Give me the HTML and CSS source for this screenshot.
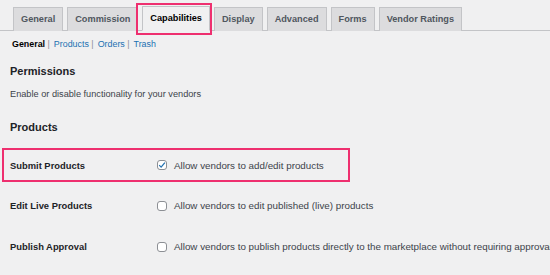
FILE: index.html
```html
<!DOCTYPE html>
<html lang="en">
<head>
    <meta charset="UTF-8">
    <title>Vendor Settings</title>
    <link rel="stylesheet" href="styles.css">
</head>
<body>
    <nav class="nav-tab-wrapper">
        <a href="#" class="nav-tab">General</a>
        <a href="#" class="nav-tab">Commission</a>
        <a href="#" class="nav-tab nav-tab-active highlight">Capabilities</a>
        <a href="#" class="nav-tab">Display</a>
        <a href="#" class="nav-tab">Advanced</a>
        <a href="#" class="nav-tab">Forms</a>
        <a href="#" class="nav-tab">Vendor Ratings</a>
    </nav>

    <ul class="subsubsub">
        <li><a href="#" class="current">General</a> |</li>
        <li><a href="#">Products</a> |</li>
        <li><a href="#">Orders</a> |</li>
        <li><a href="#">Trash</a></li>
    </ul>

    <h2 class="section-title">Permissions</h2>
    <p class="section-desc">Enable or disable functionality for your vendors</p>

    <h2 class="section-title products-title">Products</h2>

    <div class="form-table">
        <div class="form-row highlight-row">
            <div class="row-label">Submit Products</div>
            <label class="row-field">
                <span class="checkbox checked">
                    <svg viewBox="0 0 10 10" width="8" height="8"><path d="M1.5 5.2 L3.9 7.6 L8.6 2.1" fill="none" stroke="#2271b1" stroke-width="1.6"/></svg>
                </span>
                Allow vendors to add/edit products
            </label>
        </div>
        <div class="form-row">
            <div class="row-label">Edit Live Products</div>
            <label class="row-field"><span class="checkbox"></span>Allow vendors to edit published (live) products</label>
        </div>
        <div class="form-row">
            <div class="row-label">Publish Approval</div>
            <label class="row-field"><span class="checkbox"></span>Allow vendors to publish products directly to the marketplace without requiring approval.</label>
        </div>
    </div>
</body>
</html>
```
FILE: styles.css
```css
body {
    margin: 0;
    background: #f0f0f1;
    font-family: "Liberation Sans", Arial, sans-serif;
    color: #1d2327;
    overflow: hidden;
}

.nav-tab-wrapper {
    display: flex;
    align-items: flex-end;
    gap: 4px;
    margin-top: 6px;
    padding-left: 13px;
    border-bottom: 1px solid #c3c4c7;
}

.nav-tab {
    position: relative;
    margin-bottom: -1px;
    padding: 0 7px;
    height: 23px;
    line-height: 23px;
    background: #dcdcde;
    border: 1px solid #c3c4c7;
    border-bottom: none;
    color: #50575e;
    font-size: 9.2px;
    font-weight: bold;
    text-decoration: none;
    white-space: nowrap;
}

.nav-tab-active {
    background: #f0f0f1;
    color: #000;
    border-bottom: 1px solid #f0f0f1;
}

.nav-tab.highlight::after {
    content: "";
    position: absolute;
    left: -7px;
    right: -3px;
    top: -4px;
    bottom: -5px;
    border: 2px solid #ee2f6f;
}

.subsubsub {
    display: flex;
    list-style: none;
    margin: 8px 0 0;
    padding: 0 0 0 12px;
    font-size: 8.9px;
    color: #8c8f94;
}

.subsubsub li {
    margin-right: 4px;
}

.subsubsub a {
    color: #2271b1;
    text-decoration: none;
}

.subsubsub a.current {
    color: #000;
    font-weight: bold;
}

.section-title {
    margin: 16px 0 0 10px;
    font-size: 11px;
    font-weight: bold;
    color: #1d2327;
}

.section-desc {
    margin: 12px 0 0 10px;
    font-size: 9.2px;
    color: #3c434a;
}

.products-title {
    margin-top: 22px;
}

.form-table {
    margin-top: 15px;
}

.form-row {
    display: flex;
    align-items: center;
    height: 41px;
    position: relative;
}

.highlight-row {
    height: 34px;
    margin-bottom: 3px;
}

.highlight-row::after {
    content: "";
    position: absolute;
    left: 2px;
    top: 0;
    width: 348px;
    bottom: 0;
    border: 2px solid #ee2f6f;
    box-sizing: border-box;
}

.row-label {
    flex: 0 0 157px;
    box-sizing: border-box;
    padding-left: 10px;
    font-size: 9.4px;
    font-weight: bold;
    color: #1d2327;
}

.row-field {
    display: flex;
    flex-shrink: 0;
    align-items: center;
    font-size: 9.8px;
    color: #3c434a;
    white-space: nowrap;
}

.checkbox {
    display: inline-flex;
    flex-shrink: 0;
    align-items: center;
    justify-content: center;
    width: 8px;
    height: 8px;
    margin-right: 7px;
    border: 1px solid #8c8f94;
    border-radius: 3px;
    background: #fff;
}
```
